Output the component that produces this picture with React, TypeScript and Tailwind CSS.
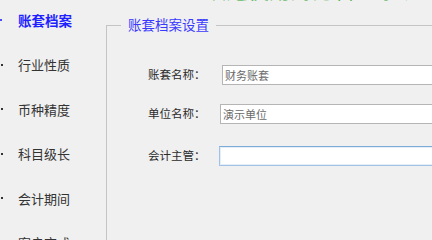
import React from "react";

const navItems = ["账套档案", "行业性质", "币种精度", "科目级长", "会计期间", "客户方式"];

export default function App() {
  return (
    <div
      className="relative w-[432px] h-[240px] overflow-hidden bg-[#f0f0f0] flex"
      style={{ fontFamily: '"Noto Sans CJK SC", "Noto Sans", sans-serif' }}
    >
      <div className="absolute left-[205px] top-[-21px] leading-none text-[21px] text-[#2ea52e] tracking-[0.5px] whitespace-nowrap">
        欢迎使用财务管理系统
      </div>
      <div className="w-[106px] shrink-0 flex flex-col mt-[-2px]">
        {navItems.map((t, i) => (
          <div key={t} className="h-[44.5px] shrink-0 flex items-center">
            <div
              className={
                i === 0
                  ? "w-[2px] h-[2px] bg-[#4a4aff]"
                  : "w-[2px] h-[2px] ml-[1px] bg-[#333333]"
              }
            />
            <span
              className={
                i === 0
                  ? "ml-[16px] text-[13.5px] font-bold text-[#1f1fff] leading-none"
                  : "ml-[15px] text-[13px] text-[#333333] leading-none"
              }
            >
              {t}
            </span>
          </div>
        ))}
      </div>
      <div className="flex-1 min-w-0 mt-[25px] border-l border-[#c4c4c4] flex flex-col">
        <div className="flex items-center h-[20px] mt-[-10px]">
          <div className="w-[14px] h-px bg-[#c4c4c4]" />
          <span className="px-[7px] text-[13.5px] leading-none text-[#3a3aff]">账套档案设置</span>
          <div className="flex-1 h-px bg-[#c4c4c4]" />
        </div>
        <div className="flex items-center pl-[41px] mt-[30px] h-[20px]">
          <span className="w-[74px] shrink-0 text-[11.5px] text-[#2a2a2a] leading-none">账套名称：</span>
          <div className="w-[260px] shrink-0 h-[20px] bg-white border border-[#b5b5b5] flex items-center pl-[2px] text-[11px] text-[#6a6a6a] leading-none">
            财务账套
          </div>
        </div>
        <div className="flex items-center pl-[41px] mt-[19px] h-[20px]">
          <span className="w-[72px] shrink-0 text-[11.5px] text-[#2a2a2a] leading-none">单位名称：</span>
          <div className="w-[260px] shrink-0 h-[20px] bg-white border border-[#b5b5b5] flex items-center pl-[2px] text-[11px] text-[#6a6a6a] leading-none">
            演示单位
          </div>
        </div>
        <div className="flex items-center pl-[41px] mt-[22px] h-[20px]">
          <span className="w-[71px] shrink-0 text-[11.5px] text-[#2a2a2a] leading-none">会计主管：</span>
          <div className="w-[260px] shrink-0 h-[20px] bg-white border border-[#9fc2e6] border-t-[#7eaad8] shadow-[inset_0_0_0_1px_#e3eef9]" />
        </div>
      </div>
    </div>
  );
}
